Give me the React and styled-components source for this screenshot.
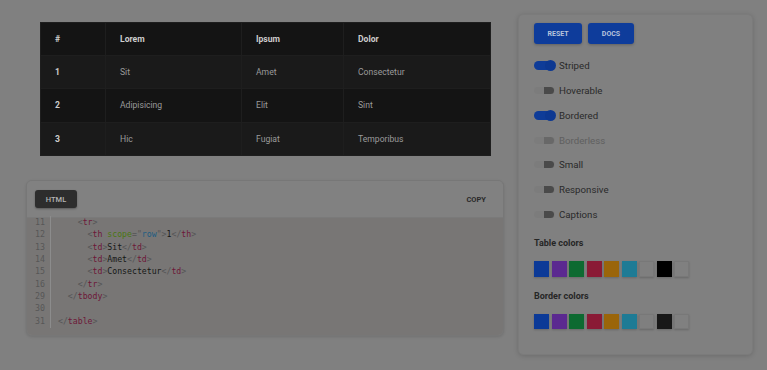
import React from "react";
import styled, { createGlobalStyle } from "styled-components";

const Global = createGlobalStyle`
  html, body { margin: 0; padding: 0; background: #808080; }
  body { font-family: Roboto, "Liberation Sans", sans-serif; height: 370px; overflow: hidden; }
`;

const Page = styled.div`
  display: flex;
  align-items: flex-start;
  gap: 14px;
  padding-left: 26px;
`;

const LeftCol = styled.div`
  width: 478px;
  padding-top: 22px;
  display: flex;
  flex-direction: column;
`;

const TableBox = styled.div`
  margin: 0 14px;
  height: 133px;
`;

const DataTable = styled.table`
  width: 450px;
  border-collapse: collapse;
  background: #141414;
  font-size: 8.6px;
  table-layout: fixed;
`;

const Row = styled.tr`
  height: ${(p) => (p.$head ? "33px" : "33.3px")};
  background: ${(p) => (p.$striped ? "#1a1a1a" : "#141414")};
`;

const Th = styled.th`
  box-sizing: border-box;
  text-align: left;
  font-weight: 700;
  color: #cdcdcd;
  padding: 0 0 0 14px;
  border: 1px solid #1e1e1e;
  width: ${(p) => p.$w}px;
`;

const Td = styled.td`
  color: #9b9b9b;
  padding: 0 0 0 14px;
  border: 1px solid #1e1e1e;
  font-weight: ${(p) => (p.$bold ? 700 : 400)};
  ${(p) => p.$bold && "color: #cdcdcd;"}
`;

const CodeCard = styled.div`
  margin-top: 25px;
  border-radius: 6px;
  border: 1px solid #777;
  box-shadow: 0 1px 3px rgba(0, 0, 0, 0.12);
  overflow: hidden;
  background: #818181;
`;

const CodeHeader = styled.div`
  height: 36px;
  display: flex;
  align-items: center;
  justify-content: space-between;
  padding: 0 17px 0 8px;
  border-bottom: 1px solid #7a7a7a;
  background: #818181;
`;

const HtmlTab = styled.div`
  width: 42px;
  height: 18px;
  border-radius: 3px;
  background: #2d2d2d;
  color: #b4b4b4;
  font-size: 7.5px;
  font-weight: 500;
  display: flex;
  align-items: center;
  justify-content: center;
  box-shadow: 0 1px 2px rgba(0, 0, 0, 0.3);
`;

const CopyBtn = styled.div`
  font-size: 7.5px;
  font-weight: 700;
  color: #2a2a2a;
`;

const CodeBody = styled.div`
  background: #787675;
  height: 117px;
  display: flex;
`;

const Gutter = styled.div`
  width: 11px;
  padding-left: 7px;
  padding-right: 5px;
  border-right: 1px solid #8c8c8c;
  height: 112px;
  text-align: right;
  font-family: "DejaVu Sans Mono", "Liberation Mono", monospace;
  font-size: 8.3px;
  line-height: 12.35px;
  color: #575757;
  margin-top: -2px;
`;

const Lines = styled.div`
  padding-left: 7px;
  font-family: "DejaVu Sans Mono", "Liberation Mono", monospace;
  font-size: 8.2px;
  line-height: 12.35px;
  color: #161616;
  white-space: pre;
  margin-top: -2px;
`;

const Tok = styled.span`
  color: ${(p) =>
    ({ p: "#555", t: "#6d1638", a: "#4a7612", v: "#1d5d82" }[p.$k] || "#161616")};
`;

const Panel = styled.div`
  width: 218px;
  margin-top: 14px;
  padding: 8px 0 25px 15px;
  background: #808080;
  border-radius: 5px;
  box-shadow: 0 1px 5px rgba(0, 0, 0, 0.16);
  border: 1px solid #7b7b7b;
`;

const ButtonRow = styled.div`
  display: flex;
  gap: 6px;
`;

const BlueBtn = styled.div`
  width: ${(p) => p.$w}px;
  height: 21px;
  border-radius: 3px;
  background: #0e3c9b;
  color: #b8c4dc;
  font-size: 7px;
  font-weight: 700;
  display: flex;
  align-items: center;
  justify-content: center;
  box-shadow: 0 1px 3px rgba(0, 0, 0, 0.25);
`;

const ToggleList = styled.div`
  margin-top: 9.6px;
  display: flex;
  flex-direction: column;
`;

const ToggleRow = styled.div`
  height: 24.7px;
  display: flex;
  align-items: center;
  gap: 4px;
  font-size: 9.7px;
  color: ${(p) => (p.$disabled ? "#5f5f5f" : "#2a2a2a")};
`;

const Track = styled.div`
  position: relative;
  width: 21px;
  height: ${(p) => (p.$on ? "9px" : "7px")};
  border-radius: 5px;
  background: ${(p) => (p.$on ? "#0f3c98" : "#7c7c7c")};
`;

const Knob = styled.div`
  position: absolute;
  right: ${(p) => (p.$on ? "-1px" : "1px")};
  top: ${(p) => (p.$on ? "-1px" : "0")};
  width: ${(p) => (p.$on ? "11px" : "10px")};
  height: ${(p) => (p.$on ? "11px" : "7px")};
  border-radius: ${(p) => (p.$on ? "50%" : "0 4px 4px 0")};
  background: ${(p) => (p.$on ? "#0d3891" : p.$disabled ? "#686868" : "#4a4a4a")};
`;

const Heading = styled.div`
  font-size: 9px;
  font-weight: 700;
  color: #262626;
  line-height: 13px;
  margin-top: ${(p) => p.$mt}px;
`;

const Swatches = styled.div`
  display: flex;
  gap: 2.5px;
  margin-top: 11px;
`;

const Swatch = styled.div`
  width: 15px;
  height: 15.5px;
  background: ${(p) => p.$c};
  box-shadow: 0 1px 2px rgba(0, 0, 0, 0.2);
  ${(p) => p.$light && "border: 1px solid #787878; box-sizing: border-box;"}
`;

const cols = [
  { h: "#", w: 65 },
  { h: "Lorem", w: 136 },
  { h: "Ipsum", w: 102 },
  { h: "Dolor", w: 147 },
];

const rows = [
  ["1", "Sit", "Amet", "Consectetur"],
  ["2", "Adipisicing", "Elit", "Sint"],
  ["3", "Hic", "Fugiat", "Temporibus"],
];

const toggles = [
  { l: "Striped", on: true },
  { l: "Hoverable" },
  { l: "Bordered", on: true },
  { l: "Borderless", disabled: true },
  { l: "Small" },
  { l: "Responsive" },
  { l: "Captions" },
];

const baseColors = ["#0c3a97", "#5b2990", "#0d6a31", "#8a1a35", "#9a650a", "#1e7b95"];

const P = ({ children }) => <Tok $k="p">{children}</Tok>;
const T = ({ children }) => <Tok $k="t">{children}</Tok>;

const codeLines = [
  ["11", <>    <P>&lt;</P><T>tr</T><P>&gt;</P></>],
  ["12", <>      <P>&lt;</P><T>th</T> <Tok $k="a">scope</Tok><P>=</P><Tok $k="v"><P>"</P>row<P>"</P></Tok><P>&gt;</P>1<P>&lt;/</P><T>th</T><P>&gt;</P></>],
  ["13", <>      <P>&lt;</P><T>td</T><P>&gt;</P>Sit<P>&lt;/</P><T>td</T><P>&gt;</P></>],
  ["14", <>      <P>&lt;</P><T>td</T><P>&gt;</P>Amet<P>&lt;/</P><T>td</T><P>&gt;</P></>],
  ["15", <>      <P>&lt;</P><T>td</T><P>&gt;</P>Consectetur<P>&lt;/</P><T>td</T><P>&gt;</P></>],
  ["16", <>    <P>&lt;/</P><T>tr</T><P>&gt;</P></>],
  ["29", <>  <P>&lt;/</P><T>tbody</T><P>&gt;</P></>],
  ["30", <> </>],
  ["31", <><P>&lt;/</P><T>table</T><P>&gt;</P></>],
];

export default function App() {
  return (
    <>
      <Global />
      <Page>
        <LeftCol>
          <TableBox>
            <DataTable>
              <thead>
                <Row $head>
                  {cols.map((c) => (
                    <Th key={c.h} $w={c.w}>{c.h}</Th>
                  ))}
                </Row>
              </thead>
              <tbody>
                {rows.map((r, i) => (
                  <Row key={i} $striped={i % 2 === 0}>
                    {r.map((cell, j) => (
                      <Td key={j} $bold={j === 0}>{cell}</Td>
                    ))}
                  </Row>
                ))}
              </tbody>
            </DataTable>
          </TableBox>
          <CodeCard>
            <CodeHeader>
              <HtmlTab>HTML</HtmlTab>
              <CopyBtn>COPY</CopyBtn>
            </CodeHeader>
            <CodeBody>
              <Gutter>
                {codeLines.map(([n]) => (
                  <div key={n}>{n}</div>
                ))}
              </Gutter>
              <Lines>
                {codeLines.map(([n, c]) => (
                  <div key={n}>{c}</div>
                ))}
              </Lines>
            </CodeBody>
          </CodeCard>
        </LeftCol>
        <Panel>
          <ButtonRow>
            <BlueBtn $w={48}>RESET</BlueBtn>
            <BlueBtn $w={46}>DOCS</BlueBtn>
          </ButtonRow>
          <ToggleList>
            {toggles.map((t) => (
              <ToggleRow key={t.l} $disabled={t.disabled}>
                <Track $on={t.on}>
                  <Knob $on={t.on} $disabled={t.disabled} />
                </Track>
                {t.l}
              </ToggleRow>
            ))}
          </ToggleList>
          <Heading $mt={11}>Table colors</Heading>
          <Swatches>
            {baseColors.map((c) => (
              <Swatch key={c} $c={c} />
            ))}
            <Swatch $c="#7f7f7f" $light />
            <Swatch $c="#000000" />
            <Swatch $c="#808080" $light />
          </Swatches>
          <Heading $mt={13}>Border colors</Heading>
          <Swatches>
            {baseColors.map((c) => (
              <Swatch key={c} $c={c} />
            ))}
            <Swatch $c="#7f7f7f" $light />
            <Swatch $c="#181818" />
            <Swatch $c="#808080" $light />
          </Swatches>
        </Panel>
      </Page>
    </>
  );
}
